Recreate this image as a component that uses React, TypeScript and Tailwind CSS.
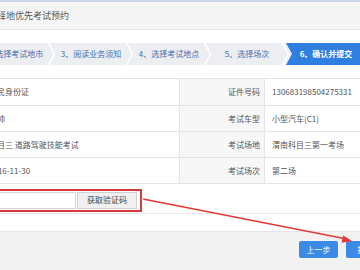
const STEPS = ["2、选择考试地市", "3、阅读业务须知", "4、选择考试地点", "5、选择场次"];

const ROWS = [
  { l1: "证件类型", v1: "居民身份证", l2: "证件号码", v2: "130683198504275331", h: "h-[27px]" },
  { l1: "姓名", v1: "王帅", l2: "考试车型", v2: "小型汽车(C1)", h: "h-[26px]" },
  { l1: "考试科目", v1: "科目三 道路驾驶技能考试", l2: "考试场地", v2: "渭南科目三第一考场", h: "h-[26px]" },
  { l1: "考试日期", v1: "2016-11-30", l2: "考试场次", v2: "第二场", h: "h-[26px]" },
];

function Chevron({ className }: { className: string }) {
  return (
    <svg className={className} width="8" height="22" viewBox="0 0 8 22">
      <polyline points="0.5,0 6.5,11 0.5,22" fill="none" stroke="#ffffff" strokeWidth="1.5" />
    </svg>
  );
}

export default function App() {
  return (
    <div className="relative w-[360px] h-[270px] overflow-hidden bg-white font-['Noto_Sans_CJK_SC',sans-serif] text-[8px] text-[#555]">
      <div className="h-[2px] bg-[#c9d7e6]" />
      <div className="h-[28px] bg-[#f5f5f5] border-b border-[#e6e6e6] flex items-center -ml-[3px] text-[9px] text-[#555]">
        择地优先考试预约
      </div>
      <div className="h-[13px]" />

      {/* steps */}
      <div className="h-[22px] bg-[#eceef1] flex -ml-[26px] w-[400px]">
        {STEPS.map((s) => (
          <div key={s} className="relative w-[78px] shrink-0 flex items-center justify-center text-[#3f6fae]">
            {s}
            <Chevron className="absolute -right-[4px] top-0" />
          </div>
        ))}
        <div className="relative w-[80px] shrink-0 flex items-center justify-center bg-[#2f7fe0] text-white font-bold [clip-path:polygon(0_0,100%_0,100%_100%,0_100%,6px_50%)]">
          6、确认并提交
        </div>
      </div>
      <div className="h-[13px]" />

      {/* table */}
      <div className="-ml-[103px] w-[480px] border-t border-[#e4e4e4]">
        {ROWS.map((r) => (
          <div key={r.l2} className={`grid grid-cols-[85px_198px_85px_1fr] ${r.h} border-b border-[#e4e4e4]`}>
            <div className="bg-[#f7f7f7] border-r border-[#e4e4e4] flex items-center justify-end pr-[4px]">{r.l1}</div>
            <div className="border-r border-[#e4e4e4] flex items-center pl-[7px] whitespace-nowrap">{r.v1}</div>
            <div className="bg-[#f7f7f7] border-r border-[#e4e4e4] flex items-center justify-end pr-[4px]">{r.l2}</div>
            <div className="flex items-center pl-[7px]">{r.v2}</div>
          </div>
        ))}
        <div className="grid grid-cols-[85px_1fr] h-[30px] border-b border-[#e8e8e8]">
          <div className="bg-[#f7f7f7] border-r border-[#e4e4e4] flex items-center justify-end pr-[4px]">验证码</div>
          <div className="flex items-center pl-[5px] pt-[3px]">
            <div className="flex items-center h-[23px] border-2 border-[#d83a3a] p-[1px] pr-[3px]">
              <div className="w-[86px] h-[17px] bg-white border border-[#d6d6d6]" />
              <div className="ml-[1px] w-[60px] h-[17px] bg-[#f0f0f0] border border-[#d0d0d0] flex items-center justify-center text-[#444]">
                获取验证码
              </div>
            </div>
          </div>
        </div>
      </div>
      <div className="h-[17px]" />

      {/* footer */}
      <div className="h-[40px] bg-[#f2f2f2] border-t border-[#e6e6e6] flex pt-[9px] pl-[299px] gap-[8px] w-[420px]">
        <div className="w-[39px] h-[17px] rounded-[2px] bg-[#3b8be6] text-white flex items-center justify-center">上一步</div>
        <div className="w-[39px] h-[17px] rounded-[2px] bg-[#3b8be6] text-white flex items-center justify-center">提交</div>
      </div>

      {/* annotation arrow */}
      <svg className="absolute inset-0 pointer-events-none" width="360" height="270" viewBox="0 0 360 270">
        <line x1="143" y1="199" x2="344" y2="238.5" stroke="#e53935" strokeWidth="1.5" />
        <polygon points="352,241 341.5,242.8 343.2,235.4" fill="#e53935" />
      </svg>
    </div>
  );
}
